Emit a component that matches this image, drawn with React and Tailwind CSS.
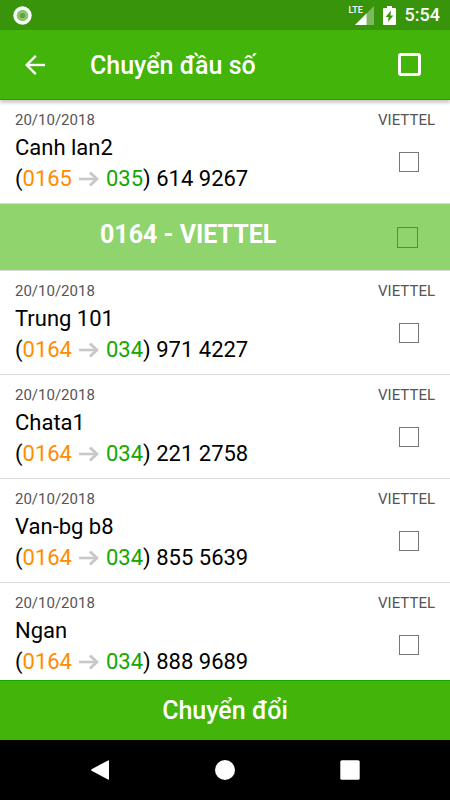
import { useState } from 'react';

const ITEMS = [
  { id: 'c1', date: '20/10/2018', carrier: 'VIETTEL', name: 'Canh lan2', from: '0165', to: '035', rest: '614 9267' },
  { id: 'g1', group: '0164 - VIETTEL' },
  { id: 'c2', date: '20/10/2018', carrier: 'VIETTEL', name: 'Trung 101', from: '0164', to: '034', rest: '971 4227' },
  { id: 'c3', date: '20/10/2018', carrier: 'VIETTEL', name: 'Chata1', from: '0164', to: '034', rest: '221 2758' },
  { id: 'c4', date: '20/10/2018', carrier: 'VIETTEL', name: 'Van-bg b8', from: '0164', to: '034', rest: '855 5639' },
  { id: 'c5', date: '20/10/2018', carrier: 'VIETTEL', name: 'Ngan', from: '0164', to: '034', rest: '888 9689' },
];

function StatusBar() {
  return (
    <div className="flex h-[30px] shrink-0 items-center justify-between bg-[#38940b] pr-[10px] pl-[13px] text-white">
      <svg width="19" height="19" viewBox="0 0 19 19" aria-hidden="true">
        <circle cx="9.5" cy="9.5" r="9.2" fill="#fff" />
        <circle cx="9.5" cy="9.5" r="5.8" fill="#8cc46f" />
        <circle cx="9.5" cy="9.5" r="2.6" fill="#5ba637" />
      </svg>
      <div className="flex items-center">
        <div className="relative mr-[9px] h-[19px] w-[23px]">
          <svg className="absolute right-0 bottom-0" width="19" height="19" viewBox="0 0 19 19" aria-hidden="true">
            <path d="M19 0V19H0Z" fill="#fff" fillOpacity=".35" />
            <path d="M11.5 7.5V19H0Z" fill="#fff" />
          </svg>
          <span className="absolute top-0 left-[-2px] bg-[#38940b] text-[9px] leading-[9px] font-medium">LTE</span>
        </div>
        <svg className="mr-[9px]" width="13" height="19" viewBox="0 0 13 19" aria-hidden="true">
          <path d="M4 0H9V2H12Q13 2 13 3V18Q13 19 12 19H1Q0 19 0 18V3Q0 2 1 2H4Z" fill="#fff" />
          <path d="M8 4.5L2.6 11H5.6L5 16L10.4 9.4H7.4Z" fill="#38940b" />
        </svg>
        <span className="text-[18px] leading-[20px] font-medium">5:54</span>
      </div>
    </div>
  );
}

function ContactRow({ item, checked, onToggle }) {
  return (
    <label className="block border-b border-[#dadada] bg-white px-[15px] pt-[10px] pb-[9px]">
      <div className="flex justify-between text-[15px] leading-[20px] text-[#555]">
        <span>{item.date}</span>
        <span>{item.carrier}</span>
      </div>
      <div className="mt-[2px] flex justify-between">
        <div className="text-[22px] leading-[31px] text-black">
          <div>{item.name}</div>
          <div className="flex items-center whitespace-pre">
            <span>(</span>
            <span className="text-[#ff8c00]">{item.from}</span>
            <svg className="mx-[7px]" width="20" height="16" viewBox="0 0 20 16" fill="none" stroke="#c8c8c8" aria-hidden="true">
              <path d="M0 8H17" strokeWidth="2.6" />
              <path d="M11 1.5L17.8 8L11 14.5" strokeWidth="3" />
            </svg>
            <span className="text-[#13a800]">{item.to}</span>
            <span>) {item.rest}</span>
          </div>
        </div>
        <input
          type="checkbox"
          checked={checked}
          onChange={onToggle}
          className="mt-[20px] mr-[16px] size-[20px] shrink-0 appearance-none border border-[#777] checked:bg-[#42b40a]"
        />
      </div>
    </label>
  );
}

function GroupRow({ title, checked, onToggle }) {
  return (
    <label className="flex h-[67px] items-center border-b border-[#dadada] bg-[#8fd46c]">
      <span className="flex-1 pb-[4px] pl-[100px] text-[25px] leading-[30px] font-bold text-white">{title}</span>
      <input
        type="checkbox"
        checked={checked}
        onChange={onToggle}
        className="mr-[32px] size-[21px] shrink-0 appearance-none border border-[#5c8a46] checked:bg-[#42b40a]"
      />
    </label>
  );
}

export default function App() {
  const [selected, setSelected] = useState([]);
  const allSelected = selected.length === ITEMS.length;

  const toggle = (id) =>
    setSelected((prev) => (prev.includes(id) ? prev.filter((x) => x !== id) : [...prev, id]));

  return (
    <div className="flex h-screen flex-col overflow-hidden bg-white font-['Roboto',sans-serif]">
      <StatusBar />

      {/* App bar */}
      <header className="z-10 flex h-[70px] shrink-0 items-center border-b border-[#1fa00a] bg-[#42b40a] text-white shadow-[0_3px_3px_rgba(0,0,0,0.2)]">
        <button type="button" aria-label="Quay lại" className="ml-[25px]">
          <svg width="20" height="20" viewBox="0 0 20 20" fill="none" stroke="#fff" strokeWidth="2.4" aria-hidden="true">
            <path d="M20 10H2" />
            <path d="M10.8 0.9L1.7 10L10.8 19.1" />
          </svg>
        </button>
        <h1 className="mt-[2px] ml-[45px] flex-1 text-[25px] leading-[30px] font-medium">Chuyển đầu số</h1>
        <input
          type="checkbox"
          aria-label="Chọn tất cả"
          checked={allSelected}
          onChange={() => setSelected(allSelected ? [] : ITEMS.map((i) => i.id))}
          className="mr-[29px] size-[23px] appearance-none rounded-[3px] border-[3px] border-white checked:bg-white"
        />
      </header>

      <main className="min-h-0 flex-1 overflow-hidden">
        {ITEMS.map((item) =>
          item.group ? (
            <GroupRow key={item.id} title={item.group} checked={selected.includes(item.id)} onToggle={() => toggle(item.id)} />
          ) : (
            <ContactRow key={item.id} item={item} checked={selected.includes(item.id)} onToggle={() => toggle(item.id)} />
          )
        )}
      </main>

      <button type="button" className="h-[60px] shrink-0 border-t border-[#13a800] bg-[#42b40a] text-[25px] leading-[30px] font-medium text-white">
        Chuyển đổi
      </button>

      {/* System navigation */}
      <nav className="flex h-[60px] shrink-0 items-center justify-center gap-[105px] bg-black">
        <button type="button" aria-label="Back">
          <svg width="20" height="20" viewBox="0 0 20 20" fill="#fff" aria-hidden="true">
            <path d="M18 0.4Q19 0 19 1V19Q19 20 18 19.6L1.6 10.8Q0.6 10 1.6 9.2Z" />
          </svg>
        </button>
        <button type="button" aria-label="Home">
          <svg width="20" height="20" viewBox="0 0 20 20" fill="#fff" aria-hidden="true">
            <circle cx="10" cy="10" r="10" />
          </svg>
        </button>
        <button type="button" aria-label="Recent apps">
          <svg width="20" height="20" viewBox="0 0 20 20" fill="#fff" aria-hidden="true">
            <rect x="0.3" y="0.3" width="19.4" height="19.4" rx="1.5" />
          </svg>
        </button>
      </nav>
    </div>
  );
}
